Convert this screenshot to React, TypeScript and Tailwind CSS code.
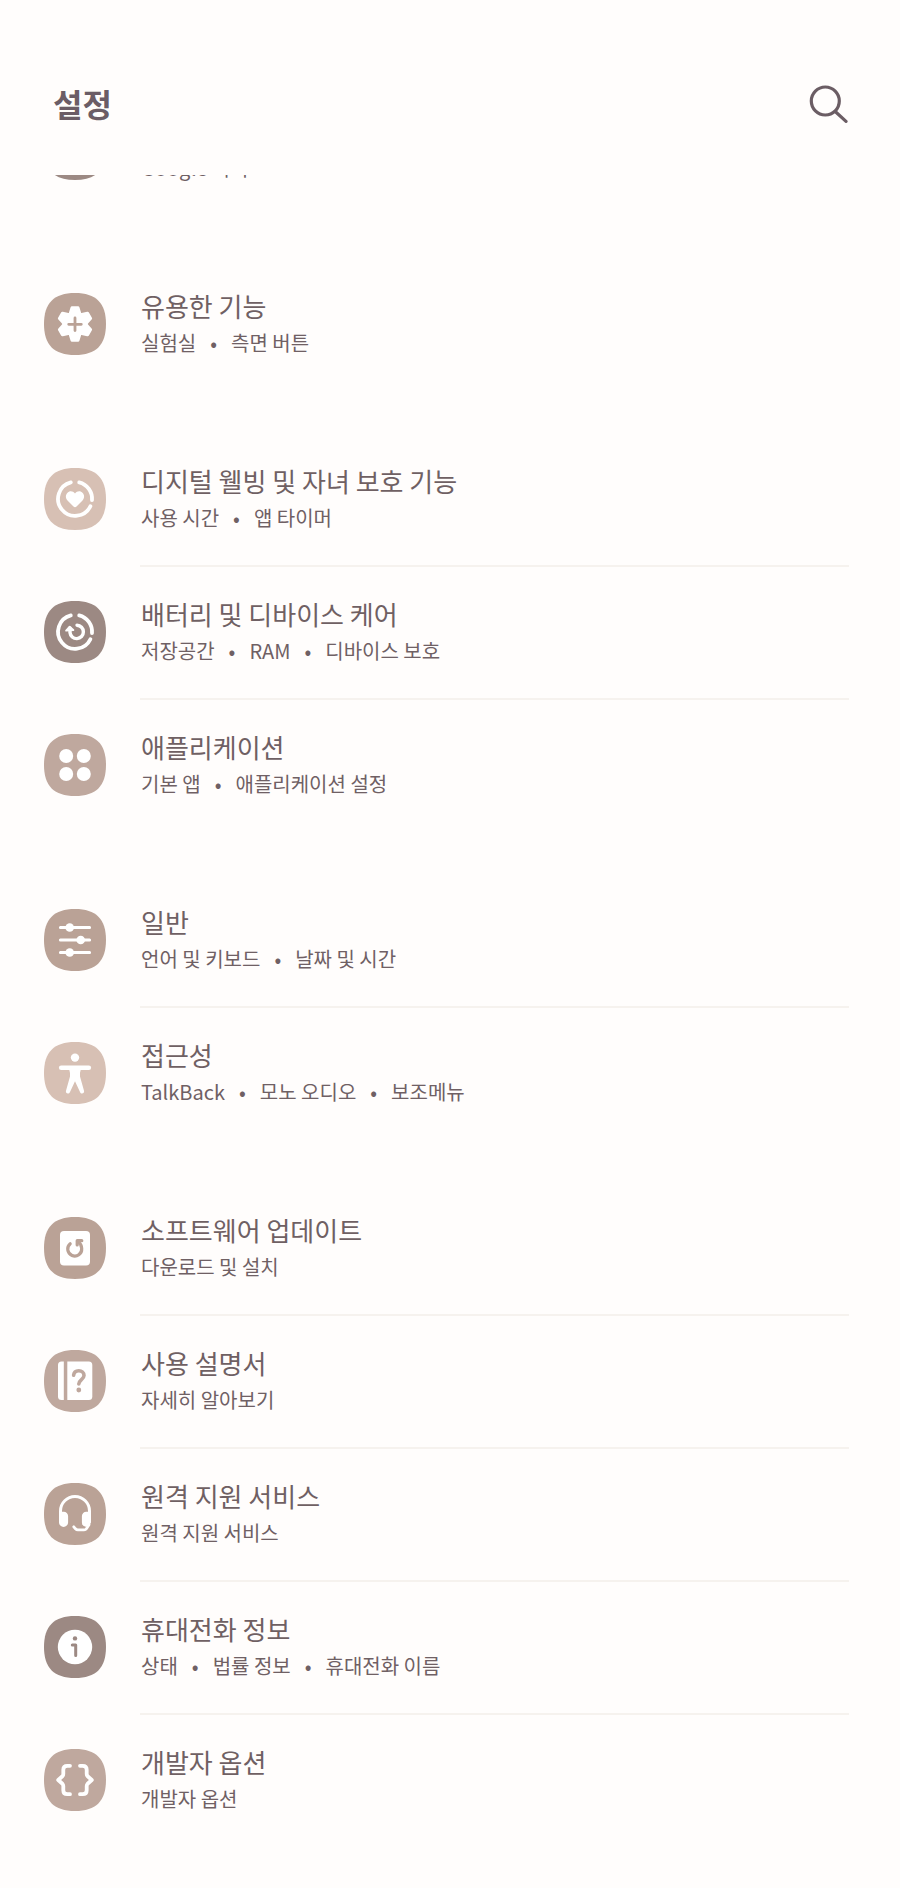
import React from 'react';

interface SettingItem {
  id: string;
  title: string;
  details: string[];
  color: string;
  glyph: React.ReactNode;
}

const ring = (
  <>
    <path d="M35.2 14.4A17 17 0 0 1 48 32.2" fill="none" stroke="white" strokeWidth="3.8" strokeLinecap="round" />
    <path d="M46.4 38.2A17 17 0 1 1 26.8 14.4" fill="none" stroke="white" strokeWidth="3.8" strokeLinecap="round" />
  </>
);

const gearTooth = 'M28 13.2h6q1.2 0 1.5 1.2l2 6.6v20l-2 6.6q-.3 1.2-1.5 1.2h-6q-1.2 0-1.5-1.2l-2-6.6V21l2-6.6q.3-1.2 1.5-1.2Z';

const groups: SettingItem[][] = [
  [
    {
      id: 'google',
      title: 'Google',
      details: ['Google 서비스'],
      color: '#9c8983',
      glyph: null,
    },
  ],
  [
    {
      id: 'advanced',
      title: '유용한 기능',
      details: ['실험실', '측면 버튼'],
      color: '#baa296',
      glyph: (
        <>
          <circle cx="31" cy="31" r="12.5" fill="white" />
          <path d={gearTooth} fill="white" />
          <path d={gearTooth} fill="white" transform="rotate(60 31 31)" />
          <path d={gearTooth} fill="white" transform="rotate(120 31 31)" />
          <path d="M31 25v12.6M24.7 31.3h12.6" stroke="#baa296" strokeWidth="2.8" strokeLinecap="round" />
        </>
      ),
    },
  ],
  [
    {
      id: 'wellbeing',
      title: '디지털 웰빙 및 자녀 보호 기능',
      details: ['사용 시간', '앱 타이머'],
      color: '#d7c0b4',
      glyph: (
        <>
          {ring}
          <path d="M31 39.2q-.8 0-1.5-.7l-6-6.1c-2.2-2.3-2-5.6-.2-7.5 2.1-2.2 5.6-2.1 7.7.5 2.1-2.6 5.6-2.7 7.7-.5 1.8 1.9 2 5.2-.2 7.5l-6 6.1q-.7.7-1.5.7Z" fill="white" />
        </>
      ),
    },
    {
      id: 'battery',
      title: '배터리 및 디바이스 케어',
      details: ['저장공간', 'RAM', '디바이스 보호'],
      color: '#9c8983',
      glyph: (
        <>
          {ring}
          <path d="M33 24.2A6.7 6.7 0 1 1 26 31.5V27" fill="none" stroke="white" strokeWidth="3.4" strokeLinecap="round" />
          <path d="M22.2 29.6l3.3-3.8 3.8 3.2Z" fill="white" stroke="white" strokeWidth="2" strokeLinejoin="round" />
        </>
      ),
    },
    {
      id: 'apps',
      title: '애플리케이션',
      details: ['기본 앱', '애플리케이션 설정'],
      color: '#bfa89e',
      glyph: (
        <g fill="white">
          <circle cx="22.2" cy="22" r="7" />
          <circle cx="39.8" cy="22" r="7" />
          <circle cx="22.2" cy="40" r="7" />
          <circle cx="39.8" cy="40" r="7" />
        </g>
      ),
    },
  ],
  [
    {
      id: 'general',
      title: '일반',
      details: ['언어 및 키보드', '날짜 및 시간'],
      color: '#baa296',
      glyph: (
        <>
          <path d="M16.4 18.5h29.2M16.4 31h29.2M16.4 43.5h29.2" stroke="white" strokeWidth="3" strokeLinecap="round" />
          <circle cx="25.7" cy="18.5" r="4.3" fill="white" />
          <circle cx="36.7" cy="31" r="4.3" fill="white" />
          <circle cx="25.7" cy="43.5" r="4.3" fill="white" />
        </>
      ),
    },
    {
      id: 'accessibility',
      title: '접근성',
      details: ['TalkBack', '모노 오디오', '보조메뉴'],
      color: '#d7c0b4',
      glyph: (
        <>
          <circle cx="31" cy="15.6" r="4.2" fill="white" />
          <path d="M17.2 25.7h27.6" stroke="white" strokeWidth="4.6" strokeLinecap="round" />
          <path d="M24 26h14q-2 2-2 5v3.5l4 14.3c.8 2.8-3 4-4 1.3L31 39.2l-5 10.9c-1.2 2.7-4.800 1.500-4-1.300l4-14.300V31q0-3-2-5Z" fill="white" />
        </>
      ),
    },
  ],
  [
    {
      id: 'update',
      title: '소프트웨어 업데이트',
      details: ['다운로드 및 설치'],
      color: '#baa296',
      glyph: (
        <>
          <rect x="16" y="14" width="30" height="34.4" rx="4" fill="white" />
          <g fill="none" stroke="#baa296" strokeWidth="3.2" strokeLinecap="round" strokeLinejoin="round">
            <path d="M26.2 26.7A7 7 0 1 0 37.7 31.5Q37.5 27 34.5 25" />
            <path d="M37.8 23.7H33.2V28" />
          </g>
        </>
      ),
    },
    {
      id: 'manual',
      title: '사용 설명서',
      details: ['자세히 알아보기'],
      color: '#bfa89e',
      glyph: (
        <>
          <path d="M17.5 11.5h2.3v38.6h-2.3q-3.5 0-3.5-3.5V15q0-3.5 3.5-3.5Z" fill="white" />
          <path d="M23.3 11.5h21.5q3.5 0 3.5 3.5v31.6q0 3.5-3.5 3.5H23.3Z" fill="white" />
          <path d="M29.6 25.2c.3-2.8 2.5-4.5 5.2-4.5 3 0 5.2 1.9 5.2 4.7 0 4-5.2 4.3-5.2 8.6" fill="none" stroke="#bfa89e" strokeWidth="3.6" strokeLinecap="round" />
          <circle cx="34.8" cy="40" r="2.4" fill="#bfa89e" />
        </>
      ),
    },
    {
      id: 'remote',
      title: '원격 지원 서비스',
      details: ['원격 지원 서비스'],
      color: '#baa296',
      glyph: (
        <>
          <path d="M16.5 32v-4a14.5 14.5 0 0 1 29 0v4" fill="none" stroke="white" strokeWidth="3" />
          <path d="M15 28.7h4.7a4.4 4.4 0 0 1 4.4 4.4v6.3a4.5 4.5 0 0 1-9.1 0Z" fill="white" />
          <path d="M47 28.7h-4.7a4.4 4.4 0 0 0-4.4 4.4v6.3a4.5 4.5 0 0 0 3.7 4.4q3.5.2 5.4-4.4Z" fill="white" />
          <path d="M29.8 43.8l1.7 2q1 1.1 2.4 1.1h6.2q1.5 0 2.3-1.2l2.6-4" fill="none" stroke="white" strokeWidth="2.8" strokeLinecap="round" strokeLinejoin="round" />
        </>
      ),
    },
    {
      id: 'about',
      title: '휴대전화 정보',
      details: ['상태', '법률 정보', '휴대전화 이름'],
      color: '#9c8983',
      glyph: (
        <>
          <circle cx="31" cy="31" r="17.2" fill="white" />
          <circle cx="31" cy="22.4" r="2.2" fill="#9c8983" />
          <path d="M28.3 28.9h3.4v10.5" fill="none" stroke="#9c8983" strokeWidth="3" strokeLinecap="round" strokeLinejoin="round" />
        </>
      ),
    },
    {
      id: 'developer',
      title: '개발자 옵션',
      details: ['개발자 옵션'],
      color: '#bfa89e',
      glyph: (
        <g fill="none" stroke="white" strokeWidth="3.8" strokeLinecap="round" strokeLinejoin="round">
          <path d="M26 16.8h-2.7q-4 0-4 4v4.2q0 1.3-.9 2.3L14.2 31l4.2 3.7q.9 1 .9 2.3v4.2q0 4 4 4H26" />
          <path d="M36 16.8h2.7q4 0 4 4v4.2q0 1.3.9 2.3l4.2 3.7-4.2 3.7q-.9 1-.9 2.3v4.2q0 4-4 4H36" />
        </g>
      ),
    },
  ],
];

function Tile({ color, children }: { color: string; children: React.ReactNode }) {
  return (
    <svg viewBox="0 0 62 62" className="w-[62px] h-[62px] shrink-0" aria-hidden="true">
      <path d="M31 0C52 0 62 10 62 31S52 62 31 62 0 52 0 31 10 0 31 0Z" fill={color} />
      {children}
    </svg>
  );
}

function SettingRow({ item, divider }: { item: SettingItem; divider: boolean }) {
  return (
    <li>
      <a href={`#${item.id}`} className="flex items-center gap-[35px] pl-11 pr-12 pt-7 pb-[29px]">
        <Tile color={item.color}>{item.glyph}</Tile>
        <div className="min-w-0">
          <p className="text-[26px] leading-[38px] text-[#6f6063]">{item.title}</p>
          <p className="text-[20px] leading-9 text-[#6f6064]">
            {item.details.map((detail, i) => (
              <React.Fragment key={detail}>
                {i > 0 && <span className="mx-[14px]">•</span>}
                {detail}
              </React.Fragment>
            ))}
          </p>
        </div>
      </a>
      {divider && <div className="h-[2px] ml-[140px] mr-[51px] bg-[#f6f2ee]" />}
    </li>
  );
}

export default function App() {
  return (
    <div className="min-h-screen bg-[#fffdfc] font-['Noto_Sans_CJK_KR',sans-serif]">
      {/* Header */}
      <header className="flex items-center justify-between pl-[53px] pr-[51px] pt-[83px] pb-[52px]">
        <h1 className="text-[32px] leading-10 font-bold text-[#6b5d66]">설정</h1>
        <button type="button" aria-label="검색" className="w-10 h-10">
          <svg viewBox="0 0 40 40" className="w-10 h-10" fill="none" stroke="#6b5d64" strokeWidth="3.2" strokeLinecap="round">
            <circle cx="16.3" cy="18" r="14" />
            <path d="M26.5 28.7L37 38.4" />
          </svg>
        </button>
      </header>

      {/* Scrolled list, the first row is cut by the header */}
      <main className="overflow-hidden">
        <div className="-mt-[91px] flex flex-col gap-11">
          {groups.map((group) => (
            <ul key={group[0].id}>
              {group.map((item, i) => (
                <SettingRow key={item.id} item={item} divider={i < group.length - 1} />
              ))}
            </ul>
          ))}
        </div>
      </main>
    </div>
  );
}
